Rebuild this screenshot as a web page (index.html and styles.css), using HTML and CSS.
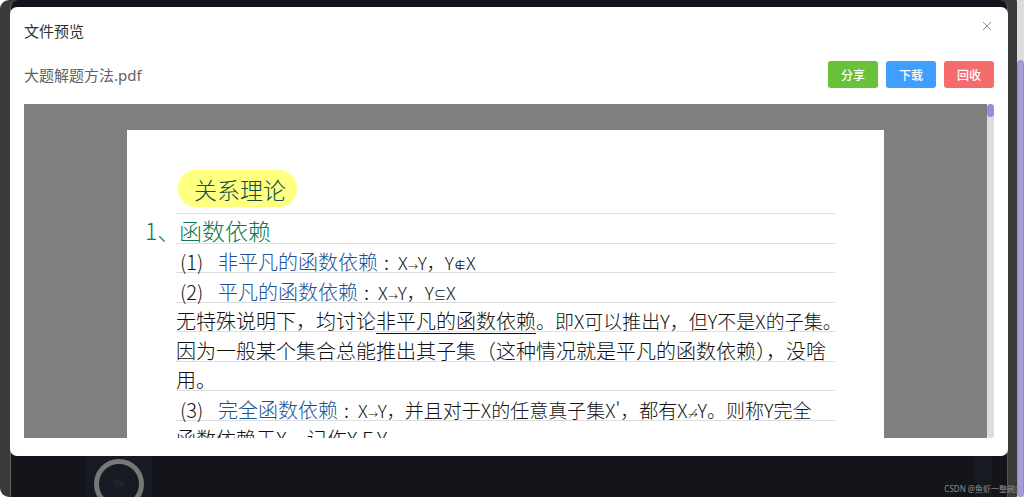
FILE: index.html
```
<!DOCTYPE html>
<html lang="zh-CN">
<head>
    <meta charset="UTF-8">
    <meta name="viewport" content="width=device-width, initial-scale=1.0">
    <title>文件预览</title>
    <link rel="stylesheet" href="styles.css">
</head>
<body>
    <div class="app">
        <div class="panel">
            <div class="card">
                <svg class="ring" viewBox="0 0 50 50">
                    <circle cx="25" cy="25" r="22.5" fill="none" stroke="#777" stroke-width="5"/>
                </svg>
                <span class="ring-text">0%</span>
            </div>
            <div class="card card-small"></div>
        </div>
        <div class="page-scroll"><div class="page-thumb"></div></div>
    </div>

    <div class="dialog" role="dialog" aria-labelledby="dialog-title">
        <div class="dialog-header">
            <h1 id="dialog-title">文件预览</h1>
            <button type="button" class="close" aria-label="关闭">
                <svg viewBox="0 0 10 10"><path d="M1 1L9 9M9 1L1 9" stroke="#909399" fill="none"/></svg>
            </button>
        </div>
        <div class="toolbar">
            <span class="file-name">大题解题方法.pdf</span>
            <div class="actions">
                <button type="button" class="btn btn-success">分享</button>
                <button type="button" class="btn btn-primary">下载</button>
                <button type="button" class="btn btn-danger">回收</button>
            </div>
        </div>
        <div class="viewer">
            <div class="canvas">
                <div class="paper">
                    <h2 class="line title"><span class="mark">关系理论</span></h2>
                    <h3 class="line heading"><span class="num">1、</span>函数依赖</h3>
                    <p class="line"><span class="item">(1)</span><span class="blue">非平凡的函数依赖</span><span class="colon">:</span><span class="formula">X<i>→</i>Y，</span><span class="formula">Y<i>∉</i>X</span></p>
                    <p class="line"><span class="item">(2)</span><span class="blue">平凡的函数依赖</span><span class="colon">:</span><span class="formula">X<i>→</i>Y，</span><span class="formula">Y<i>⊆</i>X</span></p>
                    <p class="line">无特殊说明下，均讨论<u>非平凡的函数依赖</u><span class="tight">。即X可以推出Y，但Y不是X的子集。</span></p>
                    <p class="line">因为一般某个集合总能推出其子集（这种情况就是平凡的函数依赖），没啥</p>
                    <p class="line">用。</p>
                    <p class="line"><span class="item">(3)</span><span class="blue">完全函数依赖</span><span class="colon">:</span><span class="formula">X<i>→</i>Y，</span><span class="tight">并且对于X的任意真子集X'，都有X<i>↛</i>Y。则称Y完全</span></p>
                    <p class="line">函数依赖于X，记作X F Y</p>
                </div>
            </div>
            <div class="viewer-scroll"><div class="viewer-thumb"></div></div>
        </div>
    </div>
    <div class="watermark">CSDN @鱼虾一整碗▯</div>
</body>
</html>
```

FILE: styles.css
```
* {
    box-sizing: border-box;
}

body {
    margin: 0;
    background: #fff;
    font-family: "Noto Sans", "Noto Sans CJK SC", sans-serif;
    overflow: hidden;
}

button {
    font-family: inherit;
    border: none;
    cursor: pointer;
}

.app {
    display: flex;
    height: 100vh;
    padding-left: 10px;
    background: #3b3b3b;
    border-radius: 9px;
}

.panel {
    flex: 1;
    display: flex;
    justify-content: space-between;
    align-items: flex-end;
    padding: 0 15px 0 75px;
    margin-right: 9px;
    background: #14151a;
    border-left: 1px solid #666;
    border-right: 1px solid #555;
    border-radius: 8px 8px 0 0;
}

.card {
    display: grid;
    place-items: start center;
    width: 66px;
    height: 50px;
    padding-top: 12px;
    background: #171a22;
}

.card-small {
    width: 17px;
}

.ring,
.ring-text {
    grid-area: 1 / 1;
}

.ring {
    width: 50px;
    height: 50px;
}

.ring-text {
    font-size: 8px;
    line-height: 50px;
    color: #303238;
}

.page-scroll {
    width: 7px;
    padding-top: 60px;
    background: #dcdcdc;
}

.page-thumb {
    height: 100%;
    background: #a99bd8;
    border: 1px solid #9683d8;
    border-radius: 4px;
}

.dialog {
    position: absolute;
    top: 7px;
    left: 10px;
    right: 16px;
    padding: 12px 14px 18px;
    background: #fff;
    border-radius: 7px;
}

.dialog-header {
    display: flex;
    justify-content: space-between;
    align-items: flex-start;
}

h1 {
    margin: 0;
    font-size: 15px;
    line-height: 24px;
    font-weight: 400;
    color: #303133;
}

.close {
    padding: 2px;
    background: none;
}

.close svg {
    display: block;
    width: 10px;
    height: 10px;
}

.toolbar {
    display: flex;
    justify-content: space-between;
    align-items: center;
    padding: 18px 0 16px;
}

.file-name {
    font-size: 15px;
    line-height: 24px;
    color: #606266;
}

.actions {
    display: flex;
    gap: 8px;
}

.btn {
    width: 50px;
    height: 27px;
    padding: 0;
    border-radius: 3px;
    font-size: 12px;
    font-weight: 500;
    color: #fff;
}

.btn-success {
    background: #67c23a;
}

.btn-primary {
    background: #409eff;
}

.btn-danger {
    background: #f56c6c;
}

.viewer {
    display: flex;
    height: calc(100vh - 163px);
    overflow: hidden;
}

.canvas {
    flex: 1;
    padding: 26px 103px 0;
    background: #808080;
    overflow: hidden;
}

.paper {
    height: 900px;
    padding: 40px 49px 0;
    background: #fff;
    font-family: "Noto Sans CJK SC", sans-serif;
    color: #111;
}

.line {
    display: flex;
    align-items: flex-end;
    height: 29px;
    margin: 0;
    border-bottom: 1px solid #dedede;
    font-size: 20px;
    font-weight: 300;
    line-height: 20px;
    white-space: pre;
}

.line > * {
    flex-shrink: 0;
}

.line:nth-child(even) {
    height: 30px;
}

.title {
    height: 44px;
    align-items: flex-start;
    color: #0b4f4c;
}

.mark {
    padding: 1px 11px 0 16px;
    margin-left: 2px;
    border-radius: 18px;
    background: #ffff80;
    font-size: 23px;
    line-height: 36px;
}

.heading {
    padding-left: 3px;
    font-size: 23px;
    line-height: 26px;
    color: #0c7a50;
}

.num {
    width: 34px;
    margin-left: -34px;
}

.item {
    width: 42px;
    padding-left: 4px;
}

.blue {
    color: #1a5296;
}

.colon {
    width: 20px;
    padding-left: 6px;
}

.formula {
    font-size: 18px;
}

.tight {
    font-size: 19px;
}

/* relation signs are written smaller than the letters */
.line i {
    font-family: "DejaVu Sans", sans-serif;
    font-size: 12px;
    font-style: normal;
    line-height: 12px;
}

u {
    text-underline-offset: 4px;
    text-decoration-thickness: 1px;
}

.viewer-scroll {
    width: 7px;
    background: #dcdcdc;
    border-radius: 4px;
}

.viewer-thumb {
    height: 13px;
    background: #9c89d9;
    border-radius: 4px;
}

.watermark {
    position: absolute;
    right: 5px;
    bottom: 2px;
    font-size: 8px;
    line-height: 12px;
    color: #8f8f8f;
}
```
